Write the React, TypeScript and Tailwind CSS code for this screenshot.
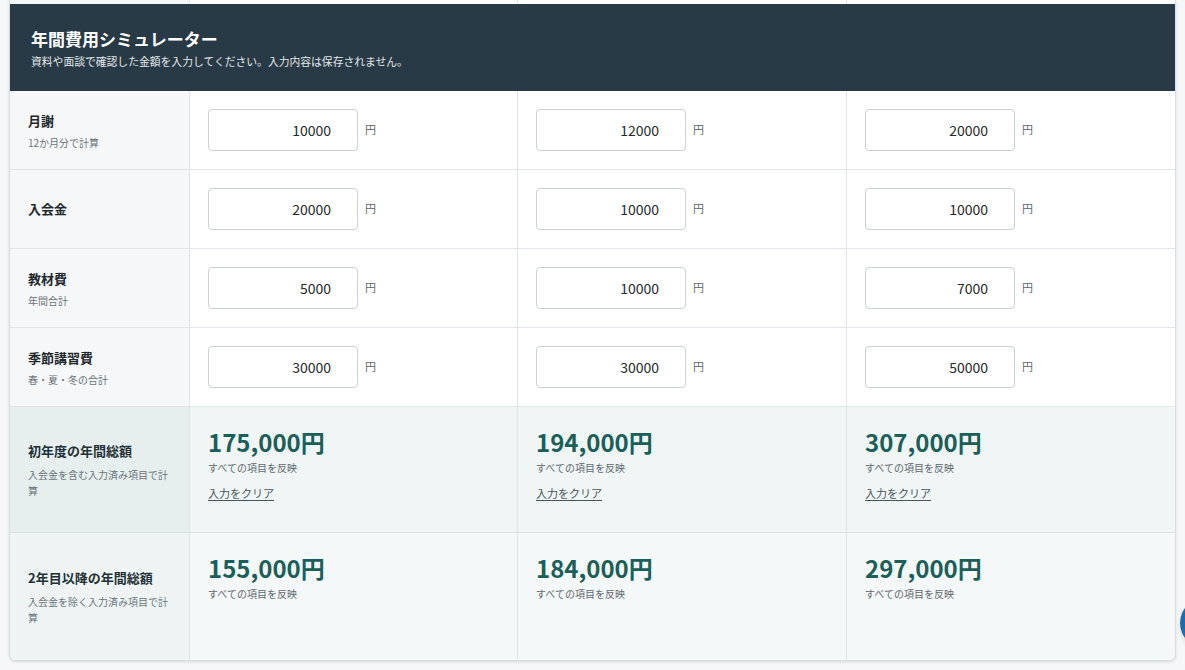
import React from 'react';

// Simulator rows (amounts are per school column)
const items = [
  { label: '月謝', note: '12か月分で計算', values: [10000, 12000, 20000] },
  { label: '入会金', note: '', values: [20000, 10000, 10000] },
  { label: '教材費', note: '年間合計', values: [5000, 10000, 7000] },
  { label: '季節講習費', note: '春・夏・冬の合計', values: [30000, 30000, 50000] },
];

const firstYear = [175000, 194000, 307000];
const laterYears = [155000, 184000, 297000];

const grid = 'grid grid-cols-[179px_328px_329px_329px]';

function InputCell({ value }: { value: number }) {
  return (
    <div className="flex items-center border-l border-[#dfe4e8] bg-white px-[18px] py-[18px]">
      <input
        type="text"
        defaultValue={value}
        className="h-[42px] w-[150px] rounded-[4px] border border-[#c9d0d6] bg-white pr-[26px] text-right text-[14px] text-[#222b30] outline-none"
      />
      <span className="ml-[7px] -mt-[2px] text-[11px] text-[#5c666d]">円</span>
    </div>
  );
}

function TotalCell({ amount, showClear, bg }: { amount: number; showClear: boolean; bg: string }) {
  return (
    <div className={`flex flex-col border-l border-[#dfe4e8] px-[18px] pt-[20px] ${bg}`}>
      <div className="text-[24px] font-bold leading-[30px] text-[#1b5f5a]">
        {amount.toLocaleString('ja-JP')}円
      </div>
      <div className="mt-[4px] text-[10px] leading-[14px] text-[#5f686e]">すべての項目を反映</div>
      {showClear && (
        <button className="mt-[10px] self-start text-[11px] leading-[16px] text-[#4a555c] underline underline-offset-2">
          入力をクリア
        </button>
      )}
    </div>
  );
}

function TotalRow({
  label,
  note,
  amounts,
  showClear,
  labelBg,
  cellBg,
  last,
}: {
  label: string;
  note: string;
  amounts: number[];
  showClear: boolean;
  labelBg: string;
  cellBg: string;
  last?: boolean;
}) {
  return (
    <div className={`${grid} min-h-[126px] ${last ? 'min-h-[127px]' : 'border-b border-[#d9e1e2]'}`}>
      <div className={`flex flex-col justify-center px-[18px] ${labelBg}`}>
        <div className="text-[13px] font-bold leading-[20px] text-[#233136]">{label}</div>
        <div className="mt-[6px] text-[10px] leading-[16px] text-[#6b757b]">{note}</div>
      </div>
      {amounts.map((a, i) => (
        <TotalCell key={i} amount={a} showClear={showClear} bg={cellBg} />
      ))}
    </div>
  );
}

export default function App() {
  return (
    <div
      className="relative h-[670px] w-[1185px] overflow-hidden bg-[#f6f7f8]"
      style={{ fontFamily: '"Noto Sans CJK JP", "Noto Sans", sans-serif' }}
    >
      <div className="ml-[9px] w-[1167px] overflow-hidden rounded-b-[6px] border-x border-b border-[#d7dde2] bg-white shadow-sm">
        {/* tail of the table above, scrolled out of view */}
        <div className={`${grid} h-[4px]`}>
          <div className="bg-[#f6f7f9]" />
          <div className="border-l border-[#dfe4e8]" />
          <div className="border-l border-[#dfe4e8]" />
          <div className="border-l border-[#dfe4e8]" />
        </div>

        <div className="bg-[#283a45] px-[21px] pb-[22px] pt-[23px] text-white">
          <h2 className="text-[17px] font-bold leading-[24px]">年間費用シミュレーター</h2>
          <p className="mt-[2px] text-[10.8px] leading-[16px] text-[#e3e8eb]">
            資料や面談で確認した金額を入力してください。入力内容は保存されません。
          </p>
        </div>

        {items.map((item) => (
          <div key={item.label} className={`${grid} border-b border-[#e1e5e9]`}>
            <div className="flex flex-col justify-center bg-[#f6f7f9] px-[18px]">
              <div className="text-[13px] font-bold leading-[20px] text-[#1f292e]">{item.label}</div>
              {item.note && (
                <div className="mt-[5px] text-[10px] leading-[14px] text-[#6b747a]">{item.note}</div>
              )}
            </div>
            {item.values.map((v, i) => (
              <InputCell key={i} value={v} />
            ))}
          </div>
        ))}

        <TotalRow
          label="初年度の年間総額"
          note="入会金を含む入力済み項目で計算"
          amounts={firstYear}
          showClear
          labelBg="bg-[#e6efee]"
          cellBg="bg-[#f0f6f6]"
        />
        <TotalRow
          label="2年目以降の年間総額"
          note="入会金を除く入力済み項目で計算"
          amounts={laterYears}
          showClear={false}
          labelBg="bg-[#eef4f4]"
          cellBg="bg-[#f4f8f9]"
          last
        />
      </div>

      {/* floating help button, mostly off-screen */}
      <div className="absolute left-[1180px] top-[598px] h-[50px] w-[50px] rounded-full bg-[#1d6bb0] shadow-md" />
    </div>
  );
}
